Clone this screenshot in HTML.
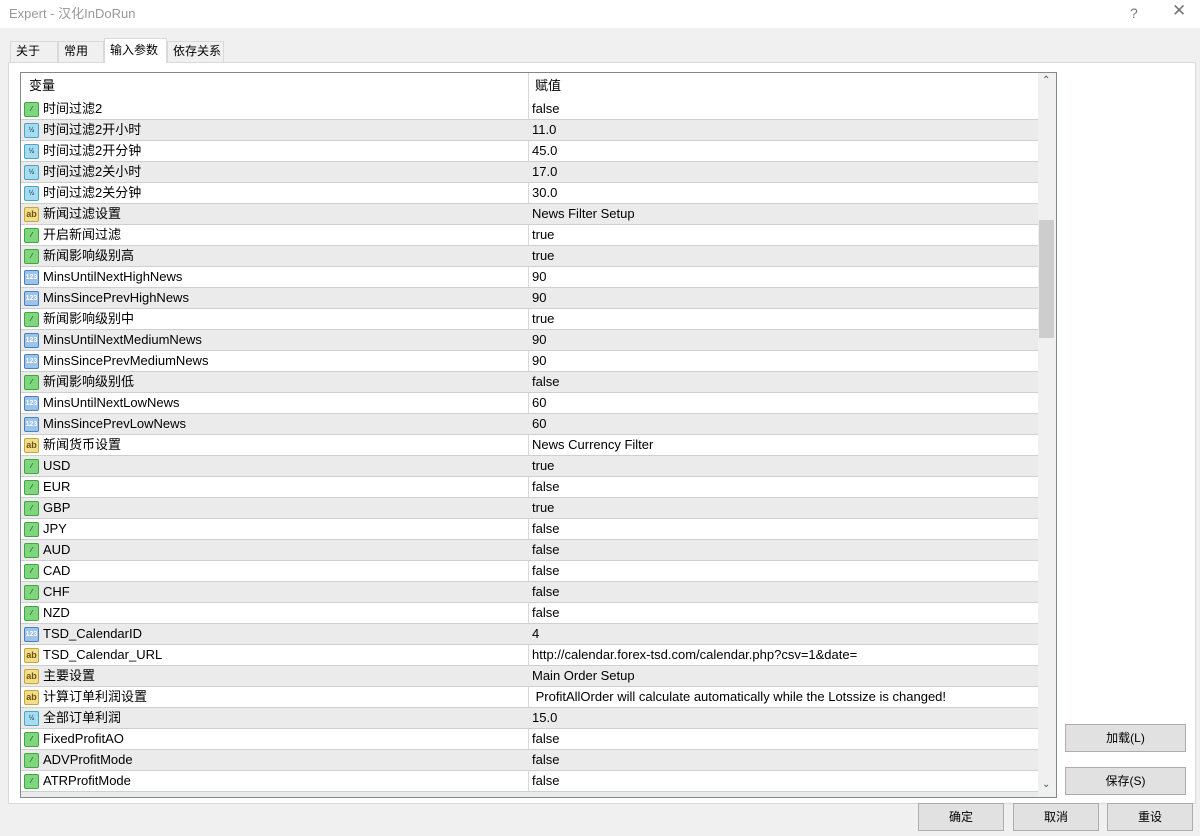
<!DOCTYPE html>
<html><head><meta charset="utf-8"><style>
*{margin:0;padding:0;box-sizing:border-box}
body{width:1200px;height:836px;background:#f0f0f0;font-family:"Liberation Sans","Noto Sans CJK SC",sans-serif;font-size:13px;color:#000;position:relative;overflow:hidden}
.title{position:absolute;left:0;top:0;width:1200px;height:28px;background:#fff;}
.title span{position:absolute;left:9px;top:6px;font-size:13px;color:#999;line-height:16px}
.title .q{left:1130px;top:5px;font-size:14px;color:#777}
.title .x{left:1172px;top:3px;font-size:17px;color:#777}
.tab{position:absolute;top:41px;height:21px;border:1px solid #d9d9d9;border-bottom:none;background:#f0f0f0;font-size:12px;padding:0 5px;line-height:19px;white-space:nowrap}
.tab.on{top:38px;height:25px;background:#fff;z-index:2;line-height:22px}
.panel{position:absolute;left:8px;top:62px;width:1188px;height:742px;background:#fff;border:1px solid #d9d9d9}
.list{position:absolute;left:20px;top:72px;width:1037px;height:726px;border:1px solid #828790;background:#fff;overflow:hidden}
.hdr{position:absolute;left:0;top:0;width:1017px;height:26px;background:#fff}
.hdr span{position:absolute;top:0;line-height:25px}
.row{position:absolute;left:0;width:1017px;height:21px;border-bottom:1px solid #cfcfcf}
.row.g{background:#ebebeb}
.row .n,.row .v{position:absolute;top:0;line-height:20px;height:20px;white-space:nowrap}
.row .n{left:22px}
.row .v{left:511px}
.col{position:absolute;left:507px;top:0;width:1px;height:726px;background:#d8d8d8}
.ic{position:absolute;left:3px;top:3px;width:15px;height:15px;border-radius:2px;font-size:7px;font-weight:bold;text-align:center;line-height:13px;font-style:normal}
.b{background:#7fd67f;border:1px solid #3ea83e;color:#1a5a1a}
.d{background:#a7dcef;border:1px solid #4aa4c8;color:#1d5a78}
.i{background:#9cc3ea;border:1px solid #4a7fc0;color:#fff}
.s{background:#f2de8a;border:1px solid #c6a53a;color:#6b5310;font-size:9px}
.sb{position:absolute;left:1017px;top:0;width:18px;height:724px;background:#f0f0f0}
.thumb{position:absolute;left:1px;top:147px;width:15px;height:118px;background:#cdcdcd}
.btn{position:absolute;height:28px;background:#e1e1e1;border:1px solid #adadad;text-align:center;line-height:26px;font-size:12px}
</style></head><body>
<div class="title"><span>Expert - 汉化InDoRun</span><span class="q">?</span><span class="x">✕</span></div>
<div class="tab" style="left:10px;width:48px">关于</div>
<div class="tab" style="left:58px;width:46px">常用</div>
<div class="tab on" style="left:104px;width:63px">输入参数</div>
<div class="tab" style="left:167px;width:57px">依存关系</div>
<div class="panel"></div>
<div class="list">
<div class="hdr"><span style="left:8px">变量</span><span style="left:514px">赋值</span></div>
<div class="col"></div>
<div class="row" style="top:26px"><i class="ic b">⁄</i><span class="n">时间过滤2</span><span class="v">false</span></div>
<div class="row g" style="top:47px"><i class="ic d">½</i><span class="n">时间过滤2开小时</span><span class="v">11.0</span></div>
<div class="row" style="top:68px"><i class="ic d">½</i><span class="n">时间过滤2开分钟</span><span class="v">45.0</span></div>
<div class="row g" style="top:89px"><i class="ic d">½</i><span class="n">时间过滤2关小时</span><span class="v">17.0</span></div>
<div class="row" style="top:110px"><i class="ic d">½</i><span class="n">时间过滤2关分钟</span><span class="v">30.0</span></div>
<div class="row g" style="top:131px"><i class="ic s">ab</i><span class="n">新闻过滤设置</span><span class="v">News Filter Setup</span></div>
<div class="row" style="top:152px"><i class="ic b">⁄</i><span class="n">开启新闻过滤</span><span class="v">true</span></div>
<div class="row g" style="top:173px"><i class="ic b">⁄</i><span class="n">新闻影响级别高</span><span class="v">true</span></div>
<div class="row" style="top:194px"><i class="ic i">123</i><span class="n">MinsUntilNextHighNews</span><span class="v">90</span></div>
<div class="row g" style="top:215px"><i class="ic i">123</i><span class="n">MinsSincePrevHighNews</span><span class="v">90</span></div>
<div class="row" style="top:236px"><i class="ic b">⁄</i><span class="n">新闻影响级别中</span><span class="v">true</span></div>
<div class="row g" style="top:257px"><i class="ic i">123</i><span class="n">MinsUntilNextMediumNews</span><span class="v">90</span></div>
<div class="row" style="top:278px"><i class="ic i">123</i><span class="n">MinsSincePrevMediumNews</span><span class="v">90</span></div>
<div class="row g" style="top:299px"><i class="ic b">⁄</i><span class="n">新闻影响级别低</span><span class="v">false</span></div>
<div class="row" style="top:320px"><i class="ic i">123</i><span class="n">MinsUntilNextLowNews</span><span class="v">60</span></div>
<div class="row g" style="top:341px"><i class="ic i">123</i><span class="n">MinsSincePrevLowNews</span><span class="v">60</span></div>
<div class="row" style="top:362px"><i class="ic s">ab</i><span class="n">新闻货币设置</span><span class="v">News Currency Filter</span></div>
<div class="row g" style="top:383px"><i class="ic b">⁄</i><span class="n">USD</span><span class="v">true</span></div>
<div class="row" style="top:404px"><i class="ic b">⁄</i><span class="n">EUR</span><span class="v">false</span></div>
<div class="row g" style="top:425px"><i class="ic b">⁄</i><span class="n">GBP</span><span class="v">true</span></div>
<div class="row" style="top:446px"><i class="ic b">⁄</i><span class="n">JPY</span><span class="v">false</span></div>
<div class="row g" style="top:467px"><i class="ic b">⁄</i><span class="n">AUD</span><span class="v">false</span></div>
<div class="row" style="top:488px"><i class="ic b">⁄</i><span class="n">CAD</span><span class="v">false</span></div>
<div class="row g" style="top:509px"><i class="ic b">⁄</i><span class="n">CHF</span><span class="v">false</span></div>
<div class="row" style="top:530px"><i class="ic b">⁄</i><span class="n">NZD</span><span class="v">false</span></div>
<div class="row g" style="top:551px"><i class="ic i">123</i><span class="n">TSD_CalendarID</span><span class="v">4</span></div>
<div class="row" style="top:572px"><i class="ic s">ab</i><span class="n">TSD_Calendar_URL</span><span class="v">http://calendar.forex-tsd.com/calendar.php?csv=1&amp;date=</span></div>
<div class="row g" style="top:593px"><i class="ic s">ab</i><span class="n">主要设置</span><span class="v">Main Order Setup</span></div>
<div class="row" style="top:614px"><i class="ic s">ab</i><span class="n">计算订单利润设置</span><span class="v">&nbsp;ProfitAllOrder will calculate automatically while the Lotssize is changed!</span></div>
<div class="row g" style="top:635px"><i class="ic d">½</i><span class="n">全部订单利润</span><span class="v">15.0</span></div>
<div class="row" style="top:656px"><i class="ic b">⁄</i><span class="n">FixedProfitAO</span><span class="v">false</span></div>
<div class="row g" style="top:677px"><i class="ic b">⁄</i><span class="n">ADVProfitMode</span><span class="v">false</span></div>
<div class="row" style="top:698px"><i class="ic b">⁄</i><span class="n">ATRProfitMode</span><span class="v">false</span></div>
<div class="row g" style="top:719px"></div>
<div class="sb"><span style="position:absolute;left:4px;top:2px;font-size:10px;color:#555">⌃</span><div class="thumb"></div><span style="position:absolute;left:4px;top:706px;font-size:10px;color:#555">⌄</span></div>
</div>
<div class="btn" style="left:1065px;top:724px;width:121px">加载(L)</div>
<div class="btn" style="left:1065px;top:767px;width:121px">保存(S)</div>
<div class="btn" style="left:918px;top:803px;width:86px">确定</div>
<div class="btn" style="left:1013px;top:803px;width:86px">取消</div>
<div class="btn" style="left:1107px;top:803px;width:86px">重设</div>
</body></html>
